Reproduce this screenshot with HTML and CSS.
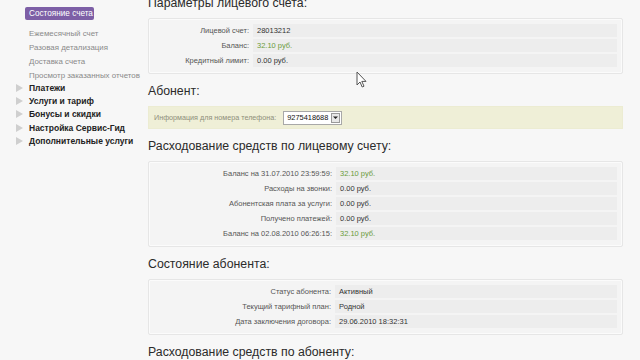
FILE: index.html
```html
<!DOCTYPE html>
<html lang="ru">
<head>
<meta charset="utf-8">
<title>Состояние счета</title>
<link rel="stylesheet" href="styles.css">
</head>
<body>
<div class="page">
  <aside class="sidebar">
    <div class="pill">Состояние счета</div>
    <ul class="sub">
      <li>Ежемесячный счет</li>
      <li>Разовая детализация</li>
      <li>Доставка счета</li>
      <li>Просмотр заказанных отчетов</li>
    </ul>
    <ul class="menu">
      <li><span class="tri"></span>Платежи</li>
      <li><span class="tri"></span>Услуги и тариф</li>
      <li><span class="tri"></span>Бонусы и скидки</li>
      <li><span class="tri"></span>Настройка Сервис-Гид</li>
      <li><span class="tri"></span>Дополнительные услуги</li>
    </ul>
  </aside>
  <main class="main">
    <h2 class="h first">Параметры лицевого счета:</h2>
    <div class="box">
      <table class="grid g1">
        <tr><td class="lbl">Лицевой счет:</td><td class="val">28013212</td></tr>
        <tr><td class="lbl">Баланс:</td><td class="val green">32.10 руб.</td></tr>
        <tr><td class="lbl">Кредитный лимит:</td><td class="val">0.00 руб.</td></tr>
      </table>
    </div>

    <h2 class="h">Абонент:</h2>
    <div class="ybox">
      <span class="ylbl">Информация для номера телефона:</span>
      <span class="select"><span class="stext">9275418688</span><span class="sbtn"><svg width="7" height="7" viewBox="0 0 7 7"><path d="M1 2.5h5L3.5 5z" fill="#222"/></svg></span></span>
    </div>

    <h2 class="h">Расходование средств по лицевому счету:</h2>
    <div class="box">
      <table class="grid g2">
        <tr><td class="lbl">Баланс на 31.07.2010 23:59:59:</td><td class="val green">32.10 руб.</td></tr>
        <tr><td class="lbl">Расходы на звонки:</td><td class="val">0.00 руб.</td></tr>
        <tr><td class="lbl">Абонентская плата за услуги:</td><td class="val">0.00 руб.</td></tr>
        <tr><td class="lbl">Получено платежей:</td><td class="val">0.00 руб.</td></tr>
        <tr><td class="lbl">Баланс на 02.08.2010 06:26:15:</td><td class="val green">32.10 руб.</td></tr>
      </table>
    </div>

    <h2 class="h">Состояние абонента:</h2>
    <div class="box">
      <table class="grid g3">
        <tr><td class="lbl">Статус абонента:</td><td class="val">Активный</td></tr>
        <tr><td class="lbl">Текущий тарифный план:</td><td class="val">Родной</td></tr>
        <tr><td class="lbl">Дата заключения договора:</td><td class="val">29.06.2010 18:32:31</td></tr>
      </table>
    </div>

    <h2 class="h">Расходование средств по абоненту:</h2>
  </main>
</div>
<svg class="cursor" width="12" height="18" viewBox="0 0 12 18"><path d="M1 1v13l3-3 2.2 5 1.8-.8-2.2-4.8H10z" fill="#fff" stroke="#555" stroke-width="1"/></svg>
</body>
</html>
```
FILE: styles.css
```css
html, body {
  margin: 0;
  padding: 0;
  background: #f7f7f7;
  overflow: hidden;
}
body {
  font-family: "Liberation Sans", Arial, sans-serif;
  color: #333;
  width: 640px;
  height: 360px;
  position: relative;
}
.page {
  display: flex;
  align-items: flex-start;
}
.sidebar {
  width: 140px;
  flex: none;
  padding-top: 7px;
  white-space: nowrap;
}
.pill {
  margin-left: 25px;
  width: 69px;
  height: 13px;
  line-height: 13px;
  box-sizing: border-box;
  padding-left: 4px;
  background: #7d5fa6;
  border-radius: 2px;
  color: #fff;
  font-size: 8.2px;
}
.sub, .menu {
  list-style: none;
  margin: 0;
  padding: 0;
}
.sub {
  margin-top: 7px;
}
.sub li {
  padding-left: 29px;
  height: 14px;
  line-height: 14px;
  font-size: 7.9px;
  color: #8a8a8a;
}
.menu {
  margin-top: -2px;
}
.menu li {
  display: flex;
  align-items: center;
  height: 13.4px;
  font-size: 8.5px;
  font-weight: bold;
  color: #222;
}
.tri {
  width: 0;
  height: 0;
  margin-left: 16px;
  margin-right: 6px;
  border-left: 7px solid #cfcfcf;
  border-top: 4.5px solid transparent;
  border-bottom: 4.5px solid transparent;
}
.main {
  width: 475px;
  margin-left: 8px;
}
.h {
  margin: 7px 0 5px;
  height: 20px;
  line-height: 20px;
  font-size: 12.3px;
  font-weight: normal;
  color: #2b2b2b;
}
.h.first {
  margin-top: -7px;
}
.box {
  border: 1px solid #e6e6e6;
  background: #f4f4f4;
  border-radius: 2px;
  padding: 3px 5px 4px 3px;
  box-shadow: inset 0 0 0 1px #fbfbfb;
}
.grid {
  width: 100%;
  border-collapse: separate;
  border-spacing: 0 2px;
  font-size: 7.5px;
}
.grid td {
  height: 13px;
  padding: 0;
  line-height: 13px;
}
.lbl {
  text-align: right;
  color: #555;
  padding-right: 4px !important;
}
.val {
  background: #ededed;
  color: #333;
  padding-left: 4px !important;
}
.g1 .lbl { width: 97px; }
.g2 .lbl { width: 180px; }
.g3 .lbl { width: 179px; }
.green {
  color: #6a9b3b !important;
}
.ybox {
  height: 23px;
  box-sizing: border-box;
  background: #efefd7;
  border: 1px solid #ececd2;
  display: flex;
  align-items: center;
  padding-left: 5px;
}
.ylbl {
  font-size: 7.2px;
  color: #8e8e7a;
  margin-right: 7px;
}
.select {
  display: flex;
  align-items: center;
  height: 14px;
  box-sizing: border-box;
  background: #fff;
  border: 1px solid #a8a8a8;
  padding: 0 1px 0 3px;
}
.stext {
  font-size: 7.4px;
  color: #111;
  margin-right: 3px;
}
.sbtn {
  width: 9px;
  height: 10px;
  border: 1px solid #9a9a9a;
  background: #e8e8e8;
  display: flex;
  align-items: center;
  justify-content: center;
  box-sizing: border-box;
}
.cursor {
  position: absolute;
  left: 356px;
  top: 71px;
}
```
